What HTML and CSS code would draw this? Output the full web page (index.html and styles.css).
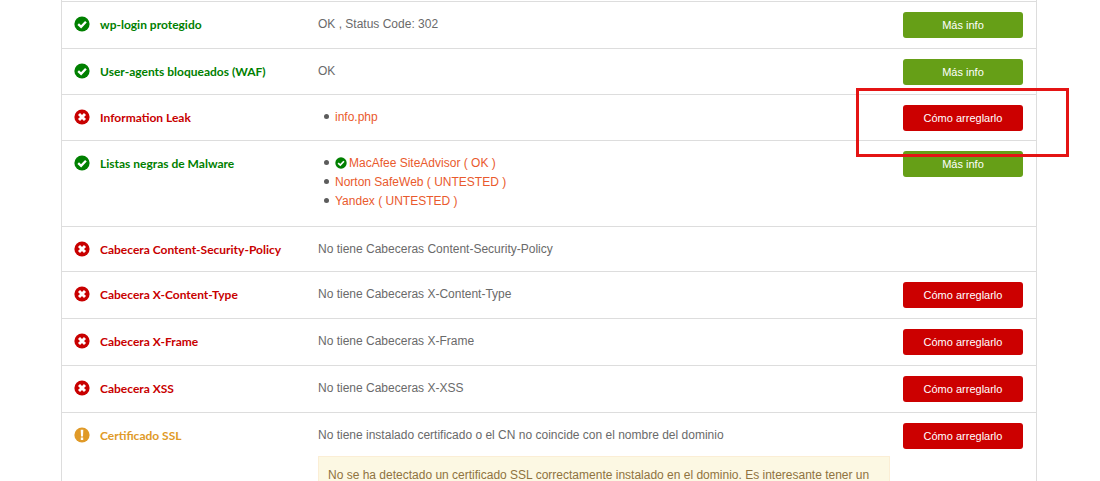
FILE: index.html
```html
<!DOCTYPE html>
<html lang="es">
<head>
<meta charset="utf-8">
<title>Informe de seguridad</title>
<link rel="stylesheet" href="styles.css">
</head>
<body>
<svg class="sprite" aria-hidden="true">
  <symbol id="ok" viewBox="0 0 16 16"><circle cx="8" cy="8" r="7.6" fill="currentColor"/><path d="M4.2 8.1 7.1 10.8 11.9 5.7" fill="none" stroke="#fff" stroke-width="2.3"/></symbol>
  <symbol id="bad" viewBox="0 0 16 16"><circle cx="8" cy="8" r="7.6" fill="currentColor"/><path d="M5 5 11 11M11 5 5 11" fill="none" stroke="#fff" stroke-width="2.9"/></symbol>
  <symbol id="warn" viewBox="0 0 16 16"><circle cx="8" cy="8" r="7.6" fill="currentColor"/><path d="M6.7 2.8h2.6L9 9.4H7zM6.8 10.6h2.4v2.3H6.8z" fill="#fff"/></symbol>
</svg>
<main class="report">
<table class="checks">
  <tbody>
    <tr class="pass">
      <td class="state"><svg class="icon"><use href="#ok"/></svg></td>
      <th class="name" scope="row">wp-login protegido</th>
      <td class="detail">OK , Status Code: 302</td>
      <td class="action"><button class="btn btn-info" type="button">Más info</button></td>
    </tr>
    <tr class="pass tight">
      <td class="state"><svg class="icon"><use href="#ok"/></svg></td>
      <th class="name" scope="row">User-agents bloqueados (WAF)</th>
      <td class="detail">OK</td>
      <td class="action"><button class="btn btn-info" type="button">Más info</button></td>
    </tr>
    <tr class="fail tight">
      <td class="state"><svg class="icon"><use href="#bad"/></svg></td>
      <th class="name" scope="row">Information Leak</th>
      <td class="detail"><ul class="list"><li><a href="#info">info.php</a></li></ul></td>
      <td class="action marked"><button class="btn btn-fix" type="button">Cómo arreglarlo</button><span class="marker"></span></td>
    </tr>
    <tr class="pass">
      <td class="state"><svg class="icon"><use href="#ok"/></svg></td>
      <th class="name" scope="row">Listas negras de Malware</th>
      <td class="detail list-cell"><ul class="list">
        <li><svg class="icon-small"><use href="#ok"/></svg><a href="#macafee">MacAfee SiteAdvisor ( OK )</a></li>
        <li><a href="#norton">Norton SafeWeb ( UNTESTED )</a></li>
        <li><a href="#yandex">Yandex ( UNTESTED )</a></li>
      </ul></td>
      <td class="action"><button class="btn btn-info" type="button">Más info</button></td>
    </tr>
    <tr class="fail">
      <td class="state"><svg class="icon"><use href="#bad"/></svg></td>
      <th class="name" scope="row">Cabecera Content-Security-Policy</th>
      <td class="detail">No tiene Cabeceras Content-Security-Policy</td>
      <td class="action"></td>
    </tr>
    <tr class="fail">
      <td class="state"><svg class="icon"><use href="#bad"/></svg></td>
      <th class="name" scope="row">Cabecera X-Content-Type</th>
      <td class="detail">No tiene Cabeceras X-Content-Type</td>
      <td class="action"><button class="btn btn-fix" type="button">Cómo arreglarlo</button></td>
    </tr>
    <tr class="fail">
      <td class="state"><svg class="icon"><use href="#bad"/></svg></td>
      <th class="name" scope="row">Cabecera X-Frame</th>
      <td class="detail">No tiene Cabeceras X-Frame</td>
      <td class="action"><button class="btn btn-fix" type="button">Cómo arreglarlo</button></td>
    </tr>
    <tr class="fail">
      <td class="state"><svg class="icon"><use href="#bad"/></svg></td>
      <th class="name" scope="row">Cabecera XSS</th>
      <td class="detail">No tiene Cabeceras X-XSS</td>
      <td class="action"><button class="btn btn-fix" type="button">Cómo arreglarlo</button></td>
    </tr>
    <tr class="warn">
      <td class="state"><svg class="icon"><use href="#warn"/></svg></td>
      <th class="name" scope="row">Certificado SSL</th>
      <td class="detail">No tiene instalado certificado o el CN no coincide con el nombre del dominio
        <p class="notice">No se ha detectado un certificado SSL correctamente instalado en el dominio. Es interesante tener un</p>
      </td>
      <td class="action"><button class="btn btn-fix" type="button">Cómo arreglarlo</button></td>
    </tr>
  </tbody>
</table>
</main>
</body>
</html>
```

FILE: styles.css
```css
* { box-sizing: border-box; }
body {
  margin: 0;
  background: #fff;
  color: #6a6a6a;
  font: 12px/19px "Liberation Sans", Arial, sans-serif;
}
.sprite { display: none; }
.report { padding: 0 63px 0 61px; }
.checks {
  width: 100%;
  table-layout: fixed;
  border: solid #ddd;
  border-width: 0 1px;
  border-collapse: separate;
  border-spacing: 0;
  padding-top: 1px;
}
.checks td, .checks th {
  padding: 12px 0;
  border-top: 1px solid #ddd;
  text-align: left;
  vertical-align: top;
}
.checks .name {
  width: 218px;
  padding: 13px 0 11px;
  font: 700 12px/20px Lato, sans-serif;
}
.checks .state { width: 38px; padding-left: 12px; }
.checks .detail { padding: 13px 13px 12px 0; }
.checks .list-cell { padding-bottom: 15px; }
.checks .action { width: 133px; padding: 10px 0; }
.checks .tight .action { padding-bottom: 9px; }
.icon { display: block; width: 16px; height: 16px; margin-top: 2px; }
.icon-small {
  width: 12px;
  height: 12px;
  margin-right: 2px;
  vertical-align: -2px;
  color: #008000;
}
.pass .state, .pass .name { color: #008000; }
.fail .state, .fail .name { color: #c80000; }
.warn .state, .warn .name { color: #e09a28; }
.list { margin: 0; padding-left: 6px; list-style: none; }
.list li::before {
  content: "";
  display: inline-block;
  width: 5px;
  height: 5px;
  margin-right: 6px;
  border-radius: 50%;
  background: #5c5c5c;
  vertical-align: 2px;
}
.list a { color: #e95a2d; text-decoration: none; }
.btn {
  display: block;
  width: 120px;
  height: 26px;
  padding: 0;
  border: 0;
  border-radius: 3px;
  color: #fff;
  font: 11px/26px "Liberation Sans", Arial, sans-serif;
}
.btn-info { background: #669f17; }
.btn-fix { background: #cc0000; }
.marked { position: relative; }
/* Callout frame drawn over the highlighted action */
.marker {
  position: absolute;
  inset: -7px -33px -17px -47px;
  border: 3px solid #e41414;
  pointer-events: none;
}
.notice {
  margin: 11px 0 0;
  padding: 9px;
  border: 1px solid #fbeed5;
  background: #fcf8e3;
  color: #8f7340;
}
```
